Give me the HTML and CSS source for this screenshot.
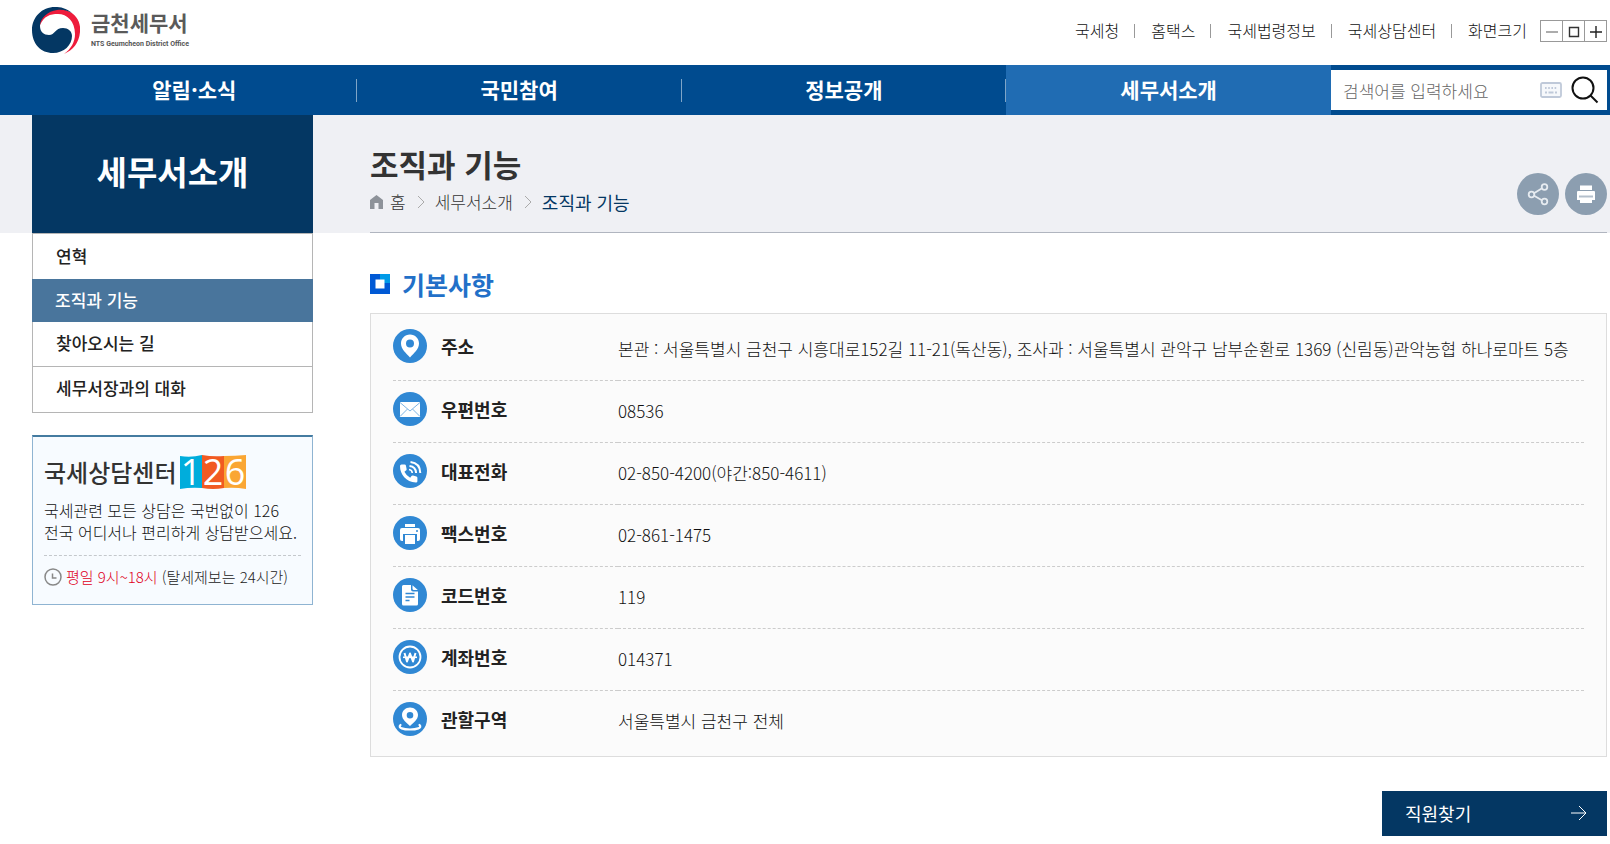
FILE: index.html
```html
<!DOCTYPE html>
<html lang="ko">
<head>
<meta charset="utf-8">
<meta name="viewport" content="width=device-width, initial-scale=1">
<title>조직과 기능 | 금천세무서</title>
<link rel="stylesheet" href="styles.css">
</head>
<body>
<header class="header">
  <a class="logo" href="#">
    <svg class="logo-mark" viewBox="0 0 48 47" aria-hidden="true">
      <path fill="#ee1c3c" d="M8 13C14 3 26-1 36 4c9 4 13 12 12 21-1 11-7 18-16 22 7-5 11-12 11-20C43 14 35 7 26 7 18 7 12 9 8 18z"/>
      <path fill="#043763" d="M40 6C34 1 29 0 23 0 10 0 0 10 0 23c0 14 9 23 21 23 11 0 19-8 19-17 0-5-4-8-9-8-8 0-8 7-14 7-5 0-9-3-9-9C8 11 16 4 25 3c6-1 11 1 15 3z"/>
    </svg>
    <span class="logo-text"><strong class="logo-name">금천세무서</strong><span class="logo-sub">NTS Geumcheon District Office</span></span>
  </a>
  <div class="util">
    <ul class="util-list">
      <li><a href="#">국세청</a></li>
      <li><a href="#">홈택스</a></li>
      <li><a href="#">국세법령정보</a></li>
      <li><a href="#">국세상담센터</a></li>
      <li>화면크기</li>
    </ul>
    <div class="zoom">
      <button type="button" class="zoom-btn" aria-label="화면 축소"><svg viewBox="0 0 20 20"><path d="M4 11h12" stroke="#888" stroke-width="1.400"/></svg></button>
      <button type="button" class="zoom-btn" aria-label="화면 기본 크기"><svg viewBox="0 0 20 20"><path d="M5.500 6.500h9v9h-9z" stroke="#333" stroke-width="1.400"/></svg></button>
      <button type="button" class="zoom-btn" aria-label="화면 확대"><svg viewBox="0 0 20 20"><path d="M4 11h12M10 5v12" stroke="#222" stroke-width="1.400"/></svg></button>
    </div>
  </div>
</header>

<div class="gnb">
  <nav class="gnb-nav">
    <a class="gnb-item" href="#">알림·소식</a>
    <a class="gnb-item" href="#">국민참여</a>
    <a class="gnb-item" href="#">정보공개</a>
    <a class="gnb-item is-active" href="#">세무서소개</a>
  </nav>
  <form class="search">
    <input class="search-input" type="text" placeholder="검색어를 입력하세요" aria-label="검색어">
    <button class="icon-btn" type="button" aria-label="화상 키보드">
      <svg class="keyboard" viewBox="0 0 22 16"><rect x="1" y="1" width="20" height="14" rx="1.500" fill="#f6f8fb" stroke="#bfc9d9" stroke-width="1.800"/><path d="M5 6h12" stroke="#bfc9d9" stroke-width="2" stroke-dasharray="1.600 1.600"/><path d="M5 10.500h2M8.500 10.500h5M15 10.500h2" stroke="#bfc9d9" stroke-width="2"/></svg>
    </button>
    <button class="icon-btn" type="submit" aria-label="검색">
      <svg class="magnifier" viewBox="0 0 28 28"><circle cx="12" cy="12" r="10.500"/><path d="M19.500 19.500l7 7"/></svg>
    </button>
  </form>
</div>

<div class="page">
  <aside class="side">
    <h2 class="side-title">세무서소개</h2>
    <ul class="side-menu">
      <li><a href="#">연혁</a></li>
      <li class="is-active"><a href="#">조직과 기능</a></li>
      <li><a href="#">찾아오시는 길</a></li>
      <li><a href="#">세무서장과의 대화</a></li>
    </ul>
    <section class="call">
      <h3 class="call-title">국세상담센터
        <svg class="call-num" viewBox="0 0 66 34" role="img" aria-label="126">
          <path fill="#00addc" d="M0 1q11 2 22-1v33q-11-1-22 1z"/>
          <path fill="#f15a22" d="M22 0q11 2 22 1v32q-11 2-22 0z"/>
          <path fill="#faa634" d="M44 1q11 0 22-1v34q-11-2-22-1z"/>
          <text x="11" y="30">1</text><text x="33" y="30">2</text><text x="55" y="30">6</text>
        </svg>
      </h3>
      <p class="call-text">국세관련 모든 상담은 국번없이 126<br>전국 어디서나 편리하게 상담받으세요.</p>
      <p class="call-time">
        <svg class="clock" viewBox="0 0 18 18" aria-hidden="true"><circle cx="9" cy="9" r="8"/><path d="M8.500 5.500v4.500h4"/></svg>
        <span><em>평일 9시~18시</em> (탈세제보는 24시간)</span>
      </p>
    </section>
  </aside>

  <main class="content">
    <div class="page-head">
      <div>
        <h1 class="page-title">조직과 기능</h1>
        <nav class="crumbs" aria-label="현재 위치">
          <svg class="home" viewBox="0 0 13 14" aria-hidden="true"><path d="M6.500 0L13 5v9H8.500V8h-4v6H0V5z"/></svg>
          <a class="crumb-home" href="#">홈</a>
          <svg class="chev" viewBox="0 0 8 14" aria-hidden="true"><path d="M1 1l6 6-6 6"/></svg>
          <a href="#">세무서소개</a>
          <svg class="chev" viewBox="0 0 8 14" aria-hidden="true"><path d="M1 1l6 6-6 6"/></svg>
          <span class="crumb-now">조직과 기능</span>
        </nav>
      </div>
      <div class="tools">
        <button class="tool" type="button" aria-label="공유">
          <svg viewBox="0 0 42 42"><path d="M15 21.500l12-7.500M15 21.500l12 7" stroke="#e6ebf0" stroke-width="1.800"/><g fill="#8c9eb0" stroke="#e6ebf0" stroke-width="1.800"><circle cx="14.500" cy="21.500" r="2.800"/><circle cx="27.500" cy="14" r="2.800"/><circle cx="27.500" cy="28.500" r="2.800"/></g></svg>
        </button>
        <button class="tool" type="button" aria-label="인쇄">
          <svg viewBox="0 0 42 42"><path fill="#fff" d="M15 12.500h12V17H15zM13 18h16q1 0 1 1v8h-3v3H15v-3h-3v-8q0-1 1-1z"/><path d="M14 23.500h14" stroke="#b4c0cc" stroke-width="2"/></svg>
        </button>
      </div>
    </div>

    <h2 class="section-title">
      <svg class="bullet" viewBox="0 0 20 20" aria-hidden="true"><path fill="#0059d5" d="M0 0h20v20H0z"/><path fill="#009be8" d="M10 0h10v9H10z"/><path fill="#fff" d="M5.500 5.500h9v9h-9z"/></svg>
      기본사항
    </h2>

    <div class="info">
      <table class="info-table">
        <tbody>
          <tr>
            <th scope="row"><span class="label"><svg class="ico" viewBox="0 0 34 34" aria-hidden="true"><circle class="disc" cx="17" cy="17" r="17"/><path fill="#fff" fill-rule="evenodd" d="M17 5.500c5.200 0 9 4 9 9 0 5.500-5 9.500-9 14-4-4.500-9-8.500-9-14 0-5 3.800-9 9-9zm0 5a4 4 0 1 0 0 8 4 4 0 0 0 0-8z"/></svg>주소</span></th>
            <td>본관 : 서울특별시 금천구 시흥대로152길 11-21(독산동), 조사과 : 서울특별시 관악구 남부순환로 1369 (신림동)관악농협 하나로마트 5층</td>
          </tr>
          <tr>
            <th scope="row"><span class="label"><svg class="ico" viewBox="0 0 34 34" aria-hidden="true"><circle class="disc" cx="17" cy="17" r="17"/><path fill="#fff" d="M7 10h20v15H7z"/><path fill="none" stroke="#7db4e4" d="M7 10.500l10 8.500 10-8.500M7 24.500l7.500-7.500M27 24.500L19.500 17"/></svg>우편번호</span></th>
            <td>08536</td>
          </tr>
          <tr>
            <th scope="row"><span class="label"><svg class="ico" viewBox="0 0 34 34" aria-hidden="true"><circle class="disc" cx="17" cy="17" r="17"/><path fill="#fff" d="M7 12q0-1.500 1.500-1.500h3.200q1 0 1.200 1l.7 3.500q.2 1-.6 1.600l-1.600 1.200q2 4 5.800 6l1.300-1.700q.6-.8 1.500-.6l3.400.9q1 .3 1 1.300v3.500q0 1.300-1.500 1.300C13 28 7 20.500 7 12z"/><path fill="none" stroke="#fff" stroke-width="2" d="M17.500 8q9.500 1 9.800 11M16.500 12q6.300.700 6.600 7"/><path fill="none" stroke="#fff" stroke-width="1.600" d="M16 15.500q3 .3 3.300 3.500"/></svg>대표전화</span></th>
            <td>02-850-4200(야간:850-4611)</td>
          </tr>
          <tr>
            <th scope="row"><span class="label"><svg class="ico" viewBox="0 0 34 34" aria-hidden="true"><circle class="disc" cx="17" cy="17" r="17"/><path fill="#fff" d="M12 8h10v3H12zM9 12h16q2 0 2 2v9q0 2-2 2h-1v-7H10v7H9q-2 0-2-2v-9q0-2 2-2zM12 19h10v9H12z"/><circle class="disc" cx="24" cy="15" r="1"/></svg>팩스번호</span></th>
            <td>02-861-1475</td>
          </tr>
          <tr>
            <th scope="row"><span class="label"><svg class="ico" viewBox="0 0 34 34" aria-hidden="true"><circle class="disc" cx="17" cy="17" r="17"/><path fill="#fff" d="M10.500 7H18v4.500q0 2 2 2h5V26q0 1.500-1.500 1.500h-13Q9 27.500 9 26V8.500Q9 7 10.500 7zM19.500 7.200l5.300 4.800h-3.800q-1.500 0-1.500-1.500z"/><path stroke="#3088d4" stroke-width="1.300" d="M12.500 15.500h9M12.500 19h9M12.500 22.500h4"/></svg>코드번호</span></th>
            <td>119</td>
          </tr>
          <tr>
            <th scope="row"><span class="label"><svg class="ico" viewBox="0 0 34 34" aria-hidden="true"><circle class="disc" cx="17" cy="17" r="17"/><circle cx="17" cy="17" r="10.500" fill="none" stroke="#fff" stroke-width="1.800"/><path fill="none" stroke="#fff" stroke-width="2" stroke-linejoin="round" d="M11.500 13l2.500 8.500 3-8 3 8 2.500-8.500"/><path stroke="#fff" stroke-width="1.600" d="M10 17.300h14"/></svg>계좌번호</span></th>
            <td>014371</td>
          </tr>
          <tr>
            <th scope="row"><span class="label"><svg class="ico" viewBox="0 0 34 34" aria-hidden="true"><circle class="disc" cx="17" cy="17" r="17"/><path fill="#fff" fill-rule="evenodd" d="M17 5.500c4.500 0 8 3.300 8 7.500 0 4.500-4.500 7.500-8 11-3.500-3.500-8-6.500-8-11 0-4.200 3.500-7.500 8-7.500zm0 4.500a3.300 3.300 0 1 0 0 6.600 3.300 3.300 0 0 0 0-6.600z"/><path fill="none" stroke="#fff" stroke-width="2.200" stroke-linecap="round" d="M7.500 23c-3 3 3 4.500 9.500 4.500s12.500-1.500 9.500-4.500"/></svg>관할구역</span></th>
            <td>서울특별시 금천구 전체</td>
          </tr>
        </tbody>
      </table>
    </div>

    <a class="staff-btn" href="#">직원찾기
      <svg class="arrow" viewBox="0 0 16 16" aria-hidden="true"><path d="M0 8h15M8 1l7 7-7 7"/></svg>
    </a>
  </main>
</div>
</body>
</html>
```

FILE: styles.css
```css
* { box-sizing: border-box; }
body {
  margin: 0;
  background: #fff;
  color: #111;
  font: 300 17px/24px "Noto Sans CJK KR", "Noto Sans", sans-serif;
}
h1, h2, h3, p, ul { margin: 0; padding: 0; }
ul { list-style: none; }
a { color: inherit; text-decoration: none; }
button { padding: 0; border: 0; background: none; cursor: pointer; }
svg { display: block; flex: none; fill: none; }

.header {
  display: flex;
  justify-content: space-between;
  align-items: center;
  height: 65px;
  padding: 0 3px 4px 32px;
}
.logo { display: flex; align-items: center; gap: 11px; }
.logo-mark { width: 48px; height: 47px; }
.logo-text { display: flex; flex-direction: column; padding-bottom: 4px; color: #5a5a5a; }
.logo-name { font-size: 21px; line-height: 28px; font-weight: 700; }
.logo-sub { padding-top: 3px; font: bold 7px/10px Roboto, "Liberation Sans", sans-serif; color: #555; }

.util { display: flex; align-items: center; gap: 13px; font-size: 16px; }
.util-list { display: flex; padding-bottom: 2px; }
.util-list li { display: flex; align-items: center; }
.util-list li + li::before {
  content: "";
  width: 1px;
  height: 14px;
  margin: 2px 16px 0 15px;
  background: #999;
}
.zoom { display: flex; border: 1px solid #999; }
.zoom-btn { width: 21px; height: 20px; display: grid; place-items: center; }
.zoom-btn + .zoom-btn { width: 22px; border-left: 1px solid #999; }
.zoom-btn svg { width: 20px; height: 20px; }

.gnb { display: flex; height: 50px; padding: 0 3px 0 32px; background: #004b8f; }
.gnb-nav { flex: 1; display: flex; }
.gnb-item {
  flex: 1 1 0;
  display: flex;
  align-items: center;
  justify-content: center;
  padding-bottom: 2px;
  color: #fff;
  font-size: 21px;
  font-weight: 700;
}
.gnb-item:not(.is-active) {
  background: linear-gradient(#7fa5c7, #7fa5c7) right center / 1px 23px no-repeat;
}
.gnb-item.is-active { background: #206cb3; }
.search {
  width: 276px;
  margin: 5px 0;
  padding: 0 8px 0 12px;
  display: flex;
  align-items: center;
  gap: 9px;
  background: #fff;
}
.search-input {
  flex: 1;
  min-width: 0;
  padding: 2px 0 0;
  border: 0;
  outline: 0;
  background: none;
  font: inherit;
}
.search-input::placeholder { color: #666; opacity: 1; }
.keyboard { width: 22px; height: 16px; }
.magnifier { width: 28px; height: 28px; stroke: #111; stroke-width: 2; }

.page {
  display: flex;
  gap: 57px;
  padding: 0 3px 8px 32px;
  background: linear-gradient(#eff0f4, #eff0f4) 0 0 / 100% 118px no-repeat;
}
.side { width: 281px; flex: none; }
.side-title {
  display: grid;
  place-items: center;
  height: 118px;
  padding-bottom: 6px;
  background: #043763;
  color: #fff;
  font-size: 33px;
  line-height: 40px;
  font-weight: 700;
}
.side-menu { border: 1px solid #b5b5b5; margin-bottom: 22px; }
.side-menu a { display: block; padding: 10px 23px 11px; font-weight: 500; color: #222; }
.side-menu li + li { border-top: 1px solid #b5b5b5; }
.side-menu li + li a { padding: 9px 23px 12px; }
.side-menu li.is-active {
  margin: 0 -1px;
  border-color: #49759c;
  background: #49759c;
}
.side-menu li.is-active a { padding: 8px 23px 10px; color: #fff; }
.side-menu .is-active + li { border-top: 0; }
.side-menu li.is-active + li a { padding: 9px 23px 11px; }

.call {
  padding: 17px 11px 15px;
  border: 1px solid #8fb4d2;
  border-top: 2px solid #447ba0;
  background: #f7fbff;
}
.call-title {
  display: flex;
  align-items: center;
  gap: 4px;
  color: #333;
  font-size: 24px;
  line-height: 36px;
  font-weight: 500;
}
.call-num { width: 66px; height: 34px; overflow: visible; }
.call-num text {
  fill: #fff;
  font: 400 36px "Open Sans", sans-serif;
  text-anchor: middle;
}
.call-text {
  padding: 9px 0 12px;
  border-bottom: 1px dashed #c4c8cc;
  font-size: 16px;
  line-height: 22px;
}
.call-time {
  display: flex;
  align-items: center;
  gap: 4px;
  padding-top: 9px;
  font-size: 15px;
  color: #222;
}
.call-time em { font-style: normal; color: #e0001c; }
.clock { width: 18px; height: 18px; stroke: #888; stroke-width: 1.5; }

.content { flex: 1; min-width: 0; display: flex; flex-direction: column; }
.page-head {
  display: flex;
  justify-content: space-between;
  align-items: flex-end;
  height: 118px;
  padding-bottom: 17px;
  border-bottom: 1px solid #b0b5bf;
}
.page-title { font-size: 31px; line-height: 40px; font-weight: 700; color: #333; }
.crumbs { display: flex; align-items: center; margin: 6px 0 1px; color: #333; }
.home { width: 13px; height: 14px; fill: #8d9299; }
.crumb-home { margin-left: 7px; }
.chev { width: 8px; height: 14px; margin: 0 10px 0 11px; stroke: #aaa; }
.crumb-now { font-size: 18px; font-weight: 400; color: #043763; }
.tools { display: flex; gap: 6px; }
.tool { width: 42px; height: 42px; border-radius: 50%; background: #8c9eb0; }
.tool svg { width: 42px; height: 42px; }

.section-title {
  display: flex;
  align-items: center;
  gap: 12px;
  margin: 32px 0 10px;
  color: #2270c8;
  font-size: 25px;
  line-height: 38px;
  font-weight: 700;
}
.bullet { width: 20px; height: 20px; }

.info { padding: 4px 22px; border: 1px solid #ddd; background: #fbfbfb; }
.info-table { width: 100%; border-collapse: collapse; }
.info-table tr { height: 62px; }
.info-table tr + tr { border-top: 1px dashed #ccc; }
.info-table th { width: 225px; padding: 0 0 5px; text-align: left; }
.info-table td { padding: 0; }
.label {
  display: flex;
  align-items: center;
  gap: 14px;
  color: #222;
  font-size: 18px;
  font-weight: 700;
}
.ico { width: 34px; height: 34px; }
.disc { fill: #3088d4; }

.staff-btn {
  align-self: flex-end;
  display: flex;
  align-items: center;
  justify-content: space-between;
  width: 225px;
  height: 45px;
  margin-top: 34px;
  padding: 0 20px 2px 23px;
  background: #043763;
  color: #fff;
  font-size: 18px;
  font-weight: 400;
}
.arrow { width: 16px; height: 16px; stroke: #fff; }
```
